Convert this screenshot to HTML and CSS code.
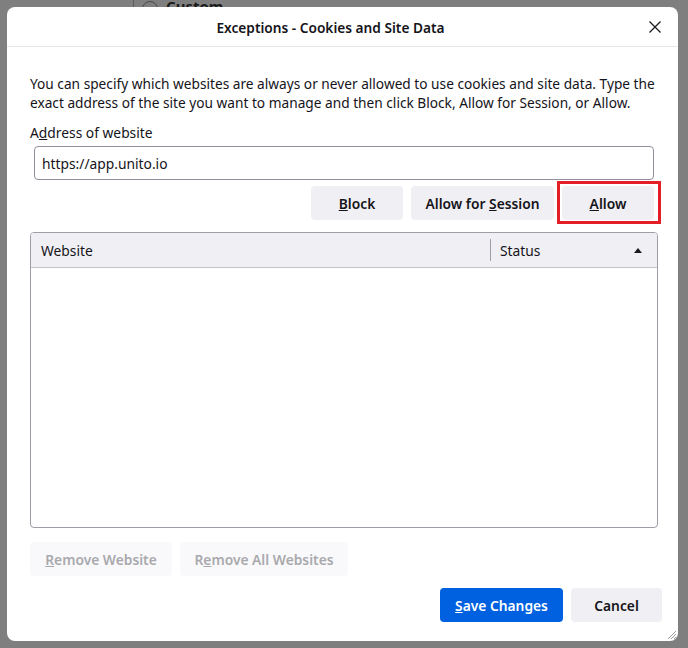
FILE: index.html
```html
<!DOCTYPE html>
<html lang="en">
<head>
<meta charset="utf-8">
<title>Exceptions - Cookies and Site Data</title>
<link rel="stylesheet" href="styles.css">
</head>
<body>
<div class="backdrop">
  <div class="bg-top">
    <span class="bg-radio"></span><span class="bg-custom"><u>C</u>ustom</span>
  </div>
</div>

<div class="dialog" role="dialog" aria-label="Exceptions - Cookies and Site Data">
  <div class="titlebar">
    <div class="title">Exceptions - Cookies and Site Data</div>
    <button class="close" aria-label="Close">
      <svg width="12" height="12" viewBox="0 0 12 12"><path d="M0.5 0.5 L11.5 11.5 M11.5 0.5 L0.5 11.5" stroke="#1b1b1f" stroke-width="1.3" fill="none"/></svg>
    </button>
  </div>
  <div class="content">
    <p class="desc">You can specify which websites are always or never allowed to use cookies and site data. Type the<br>exact address of the site you want to manage and then click Block, Allow for Session, or Allow.</p>
    <label class="label">A<u>d</u>dress of website</label>
    <div class="input">https://app.unito.io</div>
    <div class="actions">
      <button class="btn btn-block"><u>B</u>lock</button>
      <button class="btn btn-session">Allow for <u>S</u>ession</button>
      <button class="btn btn-allow"><u>A</u>llow</button>
    </div>
    <div class="table">
      <div class="thead">
        <div class="th th-site">Website</div>
        <div class="th th-status">Status<span class="sort"></span></div>
      </div>
      <div class="tbody"></div>
    </div>
    <div class="remove-row">
      <button class="btn btn-disabled btn-rm1"><u>R</u>emove Website</button>
      <button class="btn btn-disabled btn-rm2">R<u>e</u>move All Websites</button>
    </div>
    <div class="footer">
      <button class="btn btn-primary"><u>S</u>ave Changes</button>
      <button class="btn btn-cancel">Cancel</button>
    </div>
  </div>
  <svg class="grip" width="12" height="12" viewBox="0 0 12 12"><path d="M11 3 L3 11 M11 6 L6 11 M11 9 L9 11" stroke="#9a9a9a" stroke-width="1" fill="none"/></svg>
</div>
</body>
</html>
```
FILE: styles.css
```css
* { box-sizing: border-box; }
html, body { margin: 0; padding: 0; }
body {
  width: 688px;
  height: 648px;
  background: #7f7f7f;
  font-family: "Noto Sans", "Open Sans", sans-serif;
  color: #15141a;
  overflow: hidden;
  position: relative;
}
.backdrop {
  height: 648px;
  padding-left: 133px;
}
.bg-top {
  border-left: 1px solid #5a5a5a;
  height: 8px;
  display: flex;
  align-items: flex-end;
  gap: 8px;
  padding-left: 8px;
  overflow: hidden;
}
.bg-radio {
  width: 16px; height: 16px; border-radius: 50%;
  border: 1px solid #4a4a4a;
  margin-bottom: -9px;
  flex: none;
}
.bg-custom {
  font-weight: 700;
  font-size: 15px;
  color: #1a1a1a;
  line-height: 16px;
  margin-bottom: -6px;
}

.dialog {
  position: absolute;
  left: 7px;
  top: 7px;
  width: 671px;
  height: 634px;
  background: #fff;
  border-radius: 8px;
  display: flex;
  flex-direction: column;
}
.titlebar {
  height: 40px;
  border-bottom: 1px solid #e6e6e9;
  display: flex;
  align-items: center;
}
.title {
  flex: 1;
  text-align: center;
  font-size: 13.7px;
  font-weight: 600;
  padding-top: 1px;
}
.close {
  width: 24px;
  height: 24px;
  border: 0;
  background: none;
  padding: 0;
  display: flex;
  align-items: center;
  justify-content: center;
  margin-right: 11px;
  margin-left: -11px;
}
.content {
  flex: 1;
  padding: 27px 20px 0 23px;
  display: flex;
  flex-direction: column;
  font-size: 13.8px;
}
.desc {
  margin: 0;
  line-height: 19px;
  white-space: nowrap;
  font-size: 13.7px;
}
.label {
  display: block;
  margin-top: 11px;
  line-height: 19px;
}
.input {
  margin: 4px 4px 0 4px;
  height: 34px;
  border: 1px solid #8f8f9d;
  border-radius: 4px;
  padding: 0 7px;
  display: flex;
  align-items: center;
}
.actions {
  display: flex;
  justify-content: flex-end;
  gap: 8px;
  margin: 6px 4px 0 0;
}
.btn {
  font-family: inherit;
  font-size: 13.8px;
  font-weight: 600;
  color: #15141a;
  background: #f0f0f4;
  border: 0;
  border-radius: 4px;
  height: 34px;
  line-height: 35px;
  padding: 0;
  text-align: center;
  white-space: nowrap;
  flex: none;
}
.btn-block { width: 92px; }
.btn-session { width: 143px; }
.btn-allow {
  width: 92px;
  position: relative;
}
.btn-allow::after {
  content: "";
  position: absolute;
  left: -5px;
  top: -5px;
  right: -7px;
  bottom: -4px;
  border: 3px solid #e41e26;
}
.table {
  margin-top: 12px;
  height: 296px;
  border: 1px solid #9e9ea6;
  border-radius: 4px;
  display: flex;
  flex-direction: column;
  overflow: hidden;
}
.thead {
  height: 35px;
  background: #f0f0f4;
  border-bottom: 1px solid #c4c4c8;
  display: flex;
  align-items: center;
  flex: none;
}
.th { height: 100%; display: flex; align-items: center; }
.th-site { width: 459px; padding-left: 10px; }
.th-status {
  flex: 1;
  padding-left: 10px;
  padding-right: 15px;
  position: relative;
}
.th-status::before {
  content: "";
  position: absolute;
  left: 0;
  top: 6px;
  bottom: 6px;
  border-left: 1px solid #9e9ea6;
}
.sort {
  margin-left: auto;
  width: 0; height: 0;
  border-left: 4px solid transparent;
  border-right: 4px solid transparent;
  border-bottom: 5px solid #1b1b1f;
}
.tbody { flex: 1; }
.remove-row {
  display: flex;
  gap: 8px;
  margin-top: 14px;
}
.btn-rm1 { width: 142px; }
.btn-rm2 { width: 168px; }
.btn-disabled {
  background: #f9f9fb;
  color: #a9a9ad;
}
.footer {
  display: flex;
  justify-content: flex-end;
  gap: 8px;
  margin-top: 12px;
  margin-right: -4px;
}
.btn-primary {
  background: #0061e0;
  color: #fff;
  width: 123px;
}
.btn-cancel { width: 91px; }
.grip {
  position: absolute;
  right: 1px;
  bottom: 1px;
}
```
